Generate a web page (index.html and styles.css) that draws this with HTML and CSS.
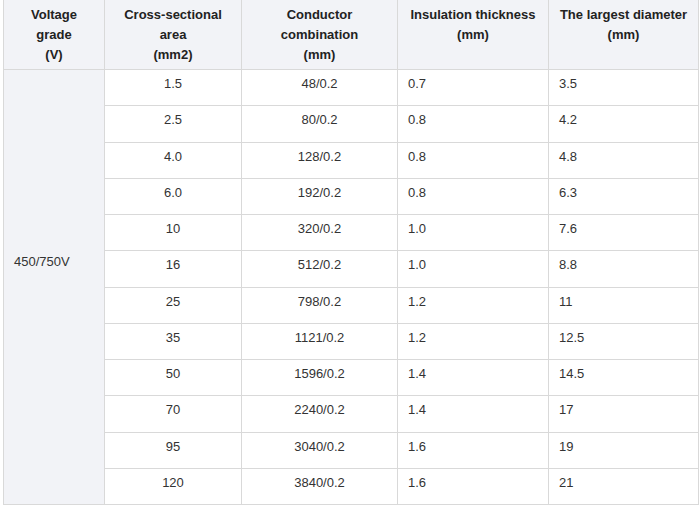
FILE: index.html
```html
<!DOCTYPE html>
<html>
<head>
<meta charset="utf-8">
<link rel="stylesheet" href="styles.css">
</head>
<body>
<table class="spec">
  <colgroup>
    <col class="c1"><col class="c2"><col class="c3"><col class="c4"><col class="c5">
  </colgroup>
  <thead>
    <tr>
      <th>Voltage<br>grade<br>(V)</th>
      <th>Cross-sectional<br>area<br>(mm2)</th>
      <th>Conductor<br>combination<br>(mm)</th>
      <th>Insulation thickness<br>(mm)</th>
      <th>The largest diameter<br>(mm)</th>
    </tr>
  </thead>
  <tbody>
    <tr><td class="volt" rowspan="12"><span>450/750V</span></td><td class="ctr">1.5</td><td class="ctr">48/0.2</td><td>0.7</td><td>3.5</td></tr>
    <tr><td class="ctr">2.5</td><td class="ctr">80/0.2</td><td>0.8</td><td>4.2</td></tr>
    <tr><td class="ctr">4.0</td><td class="ctr">128/0.2</td><td>0.8</td><td>4.8</td></tr>
    <tr><td class="ctr">6.0</td><td class="ctr">192/0.2</td><td>0.8</td><td>6.3</td></tr>
    <tr><td class="ctr">10</td><td class="ctr">320/0.2</td><td>1.0</td><td>7.6</td></tr>
    <tr><td class="ctr">16</td><td class="ctr">512/0.2</td><td>1.0</td><td>8.8</td></tr>
    <tr><td class="ctr">25</td><td class="ctr">798/0.2</td><td>1.2</td><td>11</td></tr>
    <tr><td class="ctr">35</td><td class="ctr">1121/0.2</td><td>1.2</td><td>12.5</td></tr>
    <tr><td class="ctr">50</td><td class="ctr">1596/0.2</td><td>1.4</td><td>14.5</td></tr>
    <tr><td class="ctr">70</td><td class="ctr">2240/0.2</td><td>1.4</td><td>17</td></tr>
    <tr><td class="ctr">95</td><td class="ctr">3040/0.2</td><td>1.6</td><td>19</td></tr>
    <tr><td class="ctr">120</td><td class="ctr">3840/0.2</td><td>1.6</td><td>21</td></tr>
  </tbody>
</table>
</body>
</html>
```

FILE: styles.css
```css
html, body {
  margin: 0;
  padding: 0;
  background: #ffffff;
}
body {
  padding: 0 0 0 3px;
  font-family: "Liberation Sans", Arial, sans-serif;
  font-size: 13px;
  color: #333333;
}
.spec {
  border-collapse: collapse;
  table-layout: fixed;
  width: 695px;
  margin-top: -1px;
}
.c1 { width: 101px; }
.c2 { width: 137px; }
.c3 { width: 156px; }
.c4 { width: 151px; }
.c5 { width: 150px; }
.spec th, .spec td {
  border: 1px solid #d9d9d9;
}
.spec th {
  background: #f2f3f7;
  color: #222222;
  font-weight: bold;
  text-align: center;
  vertical-align: top;
  line-height: 20px;
  padding: 5px 4px 3px;
  height: 61px;
  box-sizing: content-box;
}
.spec td {
  line-height: 20px;
  padding: 4px 10px 11px;
  height: 20.25px;
  vertical-align: top;
  text-align: left;
}
.spec td.ctr {
  text-align: center;
}
.spec td.volt {
  background: #f2f3f7;
  vertical-align: middle;
  padding: 0 10px 50px;
}
```
